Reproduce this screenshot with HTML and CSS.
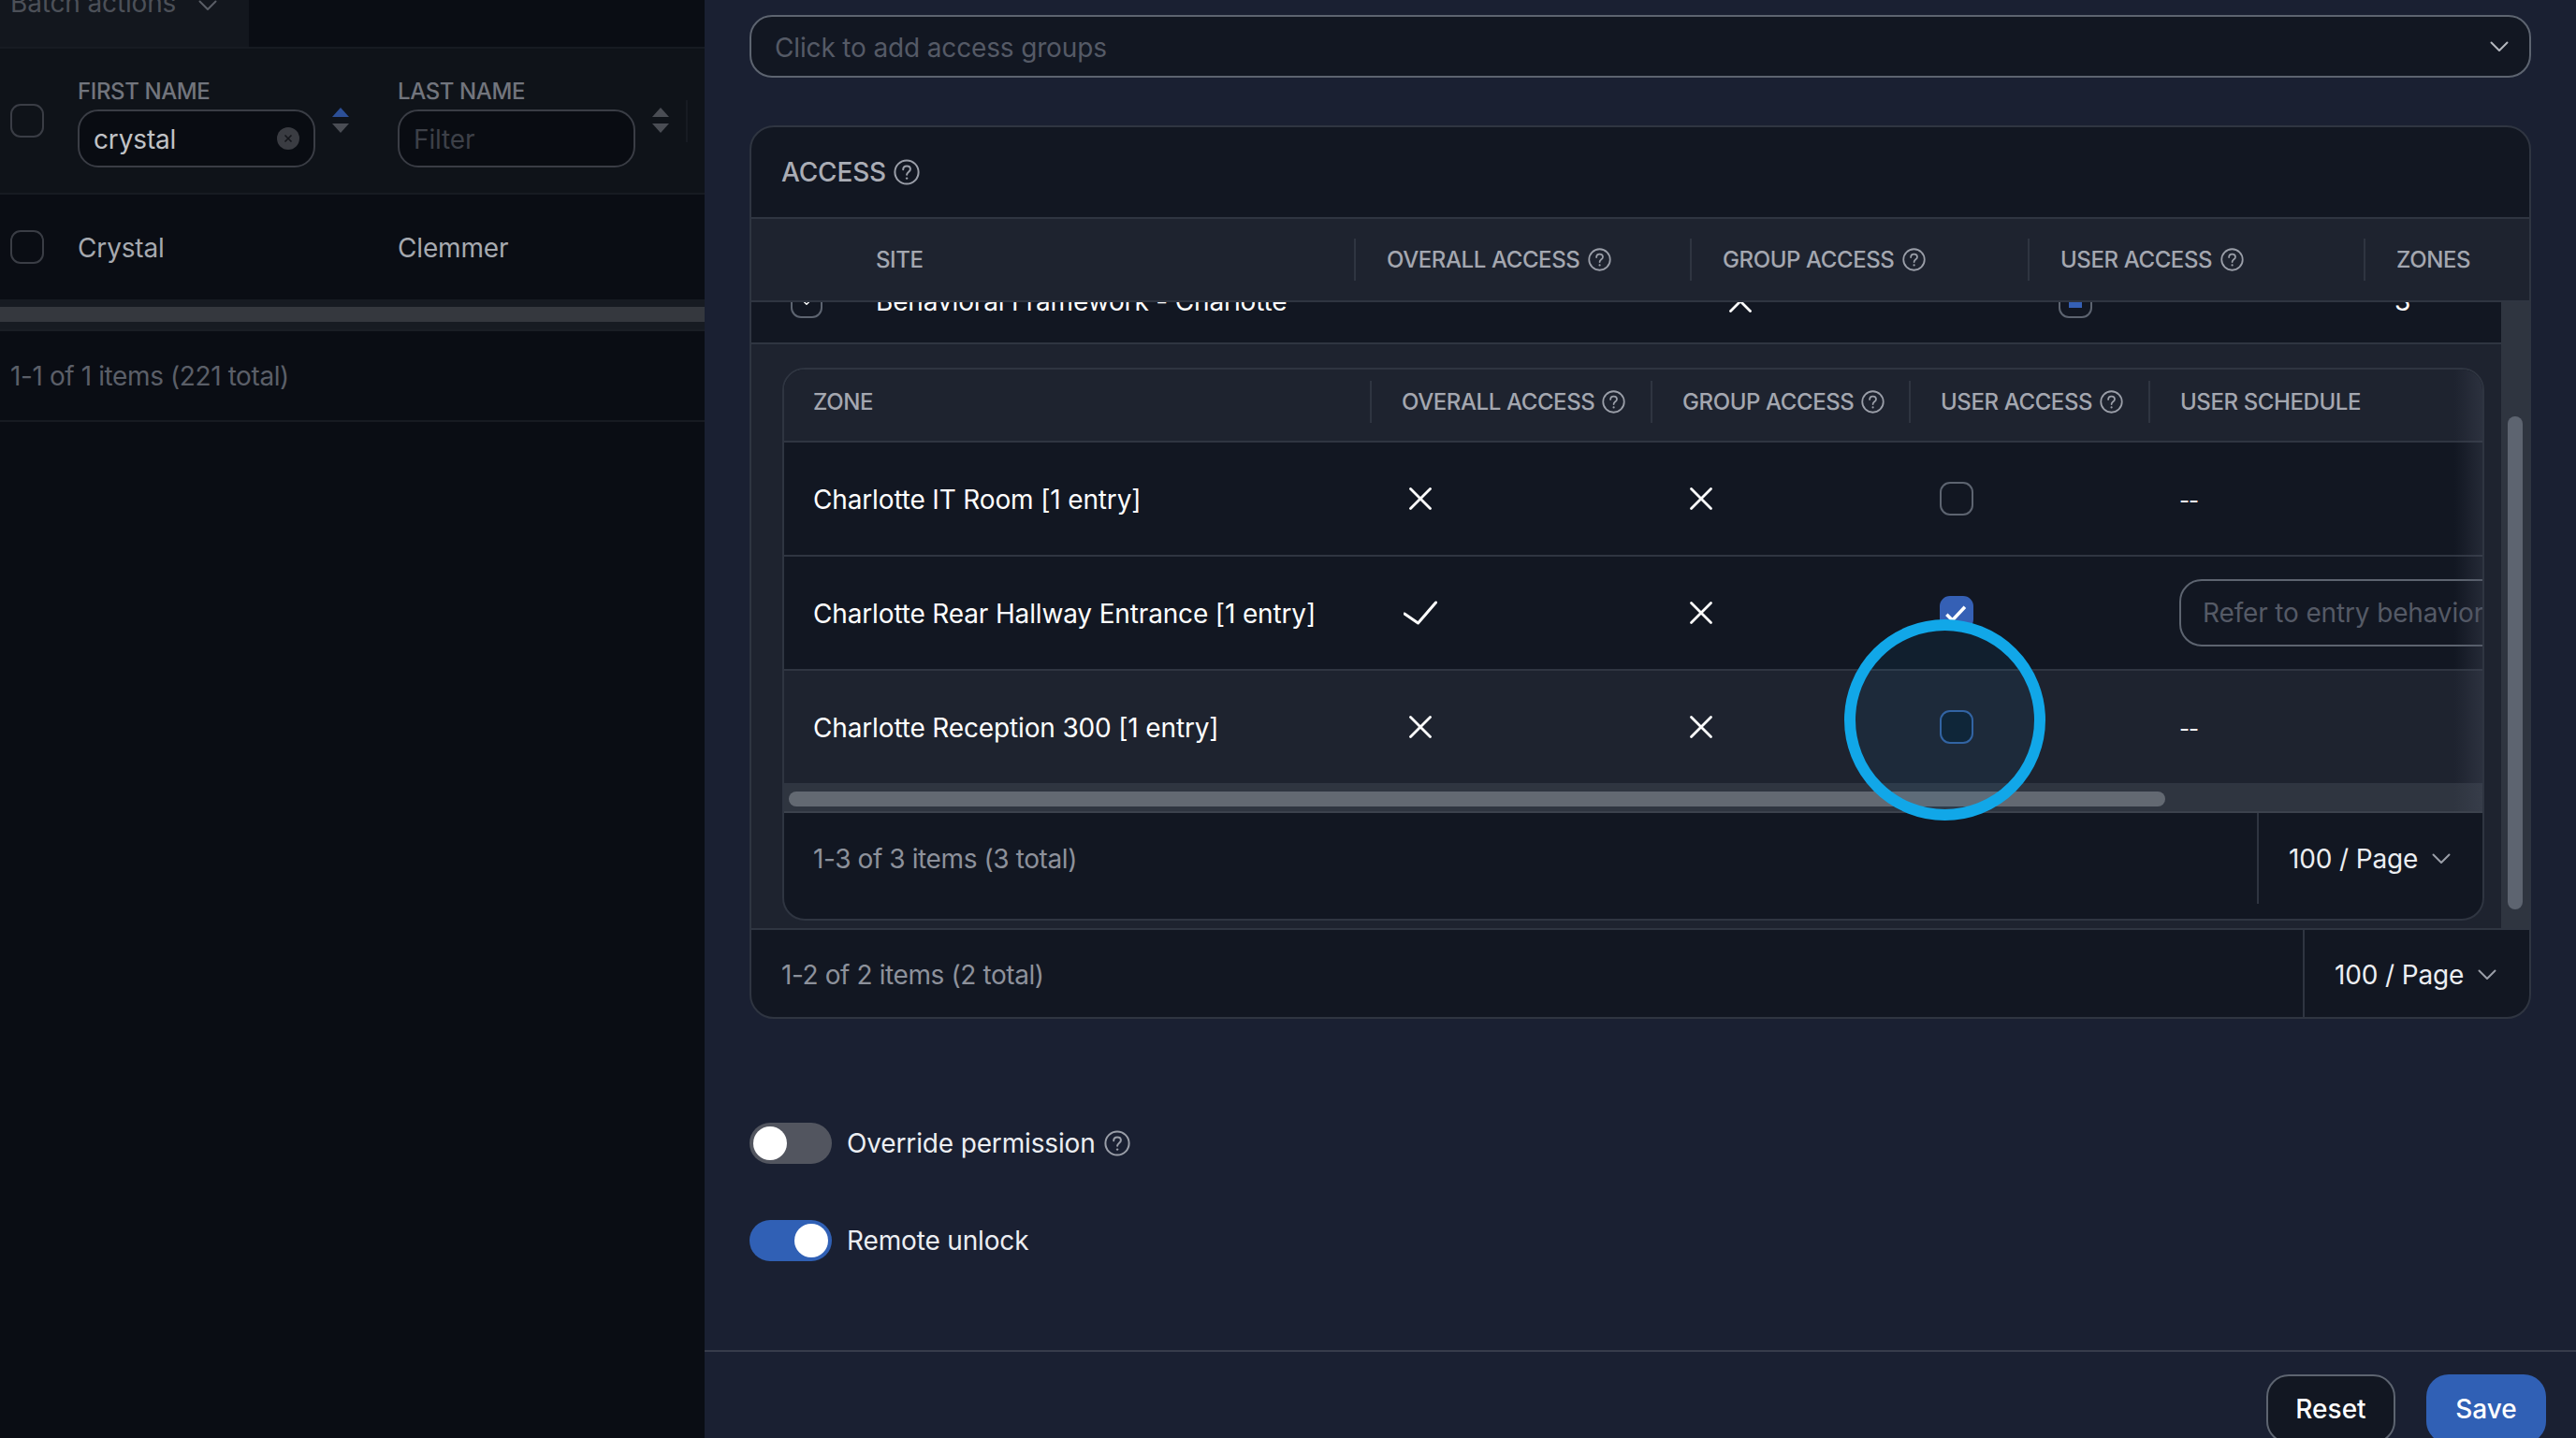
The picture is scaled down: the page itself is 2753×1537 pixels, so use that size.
FILE: index.html
```html
<!DOCTYPE html>
<html lang="en">
<head>
    <meta charset="UTF-8">
    <title>Access</title>
    <link rel="stylesheet" href="styles.css">
</head>
<body>
    <svg class="sprite" xmlns="http://www.w3.org/2000/svg">
        <symbol id="help" viewBox="0 0 28 28">
            <circle cx="14" cy="14" r="12.6" fill="none" stroke="currentColor" stroke-width="2"/>
            <path d="M10.2 11.2c0-2.3 1.7-3.8 3.9-3.8s3.8 1.4 3.8 3.4c0 2.9-3.8 3-3.8 6" fill="none" stroke="currentColor" stroke-width="2" stroke-linecap="round"/>
            <circle cx="14.1" cy="20.6" r="1.2" fill="currentColor"/>
        </symbol>
        <symbol id="cross" viewBox="0 0 36 36">
            <path d="M7.5 7.5l21 21M28.5 7.5l-21 21" fill="none" stroke="currentColor" stroke-width="2.8" stroke-linecap="round"/>
        </symbol>
        <symbol id="tick" viewBox="0 0 36 36">
            <path d="M1 19l14.5 10L34.5 7" fill="none" stroke="currentColor" stroke-width="3" stroke-linecap="round" stroke-linejoin="round"/>
        </symbol>
        <symbol id="chevron" viewBox="0 0 20 12">
            <path d="M1.5 1.5L10 10l8.500-8.500" fill="none" stroke="currentColor" stroke-width="2" stroke-linecap="round" stroke-linejoin="round"/>
        </symbol>
        <symbol id="sort" viewBox="0 0 18 27">
            <path class="sort-up" d="M9 0l9 10H0z"/>
            <path d="M0 17h18l-9 10z"/>
        </symbol>
    </svg>

    <aside class="list-panel">
        <div class="batch-row">
            <div class="batch-cell">
                <span>Batch actions</span>
                <svg class="batch-chevron"><use href="#chevron"/></svg>
            </div>
        </div>
        <div class="list-grid list-head">
            <div class="list-check"><span class="checkbox dim"></span></div>
            <div class="filter-col">
                <div class="filter">
                    <label>FIRST NAME</label>
                    <div class="filter-input">
                        <span class="filter-value">crystal</span>
                        <svg class="filter-clear" viewBox="0 0 24 24"><circle cx="12" cy="12" r="12" fill="#3a3c42"/><path d="M8.500 8.500l7 7M15.500 8.500l-7 7" stroke="#14161b" stroke-width="1.600"/></svg>
                    </div>
                </div>
                <svg class="sort sort-active"><use href="#sort"/></svg>
            </div>
            <div class="filter-col">
                <div class="filter">
                    <label>LAST NAME</label>
                    <div class="filter-input"><span class="filter-empty">Filter</span></div>
                </div>
                <svg class="sort"><use href="#sort"/></svg>
                <i class="list-sep"></i>
            </div>
        </div>
        <div class="list-grid list-row">
            <div class="list-check"><span class="checkbox dim"></span></div>
            <div class="list-text">Crystal</div>
            <div class="list-text">Clemmer</div>
        </div>
        <div class="list-scroll"><div class="list-thumb"></div></div>
        <div class="list-foot">1-1 of 1 items (221 total)</div>
    </aside>

    <main class="detail">
        <div class="detail-body">
            <div class="select">
                <span class="select-text">Click to add access groups</span>
                <svg class="select-chevron"><use href="#chevron"/></svg>
            </div>

            <section class="card">
                <h2 class="card-title">ACCESS <svg class="help big"><use href="#help"/></svg></h2>

                <div class="site-grid site-head">
                    <div class="th first"><span>SITE</span></div>
                    <div class="th"><i class="sep"></i><span>OVERALL ACCESS</span><svg class="help"><use href="#help"/></svg></div>
                    <div class="th"><i class="sep"></i><span>GROUP ACCESS</span><svg class="help"><use href="#help"/></svg></div>
                    <div class="th"><i class="sep"></i><span>USER ACCESS</span><svg class="help"><use href="#help"/></svg></div>
                    <div class="th"><i class="sep"></i><span>ZONES</span></div>
                </div>

                <div class="site-body">
                    <div class="site-scroll">
                        <div class="site-grid site-row">
                            <div class="site-name">
                                <span class="checkbox expander"><svg><use href="#chevron"/></svg></span>
                                <span>Behavioral Framework - Charlotte</span>
                            </div>
                            <div></div>
                            <div class="td-icon"><svg class="mark"><use href="#cross"/></svg></div>
                            <div class="td-check"><span class="checkbox partial"><i></i></span></div>
                            <div class="td-count">3</div>
                        </div>

                        <div class="expanded">
                            <div class="zones">
                                <div class="zone-grid zone-head">
                                    <div class="th first"><span>ZONE</span></div>
                                    <div class="th"><i class="sep"></i><span>OVERALL ACCESS</span><svg class="help"><use href="#help"/></svg></div>
                                    <div class="th"><i class="sep"></i><span>GROUP ACCESS</span><svg class="help"><use href="#help"/></svg></div>
                                    <div class="th"><i class="sep"></i><span>USER ACCESS</span><svg class="help"><use href="#help"/></svg></div>
                                    <div class="th"><i class="sep"></i><span>USER SCHEDULE</span></div>
                                </div>

                                <div class="zone-grid zone-row">
                                    <div class="zone-name">Charlotte IT Room [1 entry]</div>
                                    <div class="td-icon"><svg class="mark"><use href="#cross"/></svg></div>
                                    <div class="td-icon"><svg class="mark"><use href="#cross"/></svg></div>
                                    <div class="td-check"><span class="checkbox"></span></div>
                                    <div class="td-sched"><span class="dashes">--</span></div>
                                </div>
                                <div class="zone-grid zone-row">
                                    <div class="zone-name">Charlotte Rear Hallway Entrance [1 entry]</div>
                                    <div class="td-icon"><svg class="mark"><use href="#tick"/></svg></div>
                                    <div class="td-icon"><svg class="mark"><use href="#cross"/></svg></div>
                                    <div class="td-check"><span class="checkbox checked"><svg viewBox="0 0 36 36"><path d="M6 20l7 7 15-16" fill="none" stroke="#fff" stroke-width="4"/></svg></span></div>
                                    <div class="td-sched"><div class="sched-input">Refer to entry behavior</div></div>
                                </div>
                                <div class="zone-grid zone-row hover">
                                    <div class="zone-name">Charlotte Reception 300 [1 entry]</div>
                                    <div class="td-icon"><svg class="mark"><use href="#cross"/></svg></div>
                                    <div class="td-icon"><svg class="mark"><use href="#cross"/></svg></div>
                                    <div class="td-check"><span class="checkbox focus"></span></div>
                                    <div class="td-sched"><span class="dashes">--</span></div>
                                </div>

                                <div class="zone-scroll"><div class="zone-thumb"></div></div>
                                <div class="table-foot inner">
                                    <span class="count">1-3 of 3 items (3 total)</span>
                                    <div class="pager inner-pager">100 / Page <svg><use href="#chevron"/></svg></div>
                                </div>
                                <div class="edge-fade"></div>
                            </div>
                        </div>
                    </div>
                    <div class="vbar"><div class="vthumb"></div></div>
                </div>

                <div class="table-foot outer">
                    <span class="count">1-2 of 2 items (2 total)</span>
                    <div class="pager outer-pager">100 / Page <svg><use href="#chevron"/></svg></div>
                </div>
            </section>

            <div class="toggles">
                <div class="toggle-row">
                    <span class="toggle"><i></i></span>
                    <span>Override permission</span>
                    <svg class="help big"><use href="#help"/></svg>
                </div>
                <div class="toggle-row">
                    <span class="toggle on"><i></i></span>
                    <span>Remote unlock</span>
                </div>
            </div>
        </div>

        <footer class="actions">
            <button class="btn reset">Reset</button>
            <button class="btn save">Save</button>
        </footer>
    </main>

    <div class="ring"></div>
</body>
</html>
```

FILE: styles.css
```css
* {
    box-sizing: border-box;
}
html, body {
    margin: 0;
    height: 1537px;
    overflow: hidden;
}
body {
    position: relative;
    display: flex;
    font-family: 'Inter', 'Liberation Sans', sans-serif;
    font-size: 28px;
    letter-spacing: -0.15px;
    font-variant-ligatures: none;
    color: #eceef2;
    background: #1a2032;
}
.sprite {
    display: none;
}
svg {
    display: block;
    flex: none;
}

/* dimmed list on the left */
.list-panel {
    width: 753px;
    flex: none;
    background: #0a0d14;
    color: #a6a9af;
}
.batch-row {
    height: 52px;
    border-bottom: 2px solid #171b22;
}
.batch-cell {
    width: 266px;
    height: 50px;
    padding-left: 11px;
    display: flex;
    align-items: flex-start;
    gap: 24px;
    background: #13171e;
    color: #4c5058;
    line-height: 28px;
}
.batch-cell span {
    margin-top: -11px;
}
.batch-chevron {
    width: 20px;
    height: 12px;
    color: #5a5e66;
}
.list-grid {
    display: grid;
    grid-template-columns: 83px 342px minmax(0, 1fr);
}
.list-head {
    height: 156px;
    padding-top: 32px;
    background: #0f1319;
    border-bottom: 2px solid #171b22;
}
.list-check {
    padding-left: 11px;
    display: flex;
    align-items: center;
}
.list-head .list-check {
    margin-top: -32px;
}
.filter-col {
    display: flex;
    align-items: flex-start;
}
.filter {
    width: 254px;
}
.filter label {
    display: block;
    height: 28px;
    margin-bottom: 5px;
    font-size: 24px;
    line-height: 28px;
    font-weight: 500;
    letter-spacing: -0.4px;
    color: #72757d;
}
.filter-input {
    height: 62px;
    padding: 0 15px;
    display: flex;
    align-items: center;
    justify-content: space-between;
    border: 2px solid #3a3d45;
    border-radius: 22px;
    background: #090c12;
}
.filter-value {
    padding-top: 2px;
    color: #c0c2c6;
}
.filter-empty {
    padding-top: 2px;
    color: #3d4048;
}
.filter-clear {
    width: 24px;
    height: 24px;
}
.sort {
    width: 18px;
    height: 27px;
    margin: 31px 0 0 18px;
    fill: #4a4d54;
}
.sort-up {
    fill: var(--sort-up, #4a4d54);
}
.sort-active {
    --sort-up: #2c4f96;
}
.list-sep {
    width: 2px;
    height: 45px;
    margin: 23px 0 0 18px;
    background: #171b22;
}
.list-row {
    height: 112px;
    align-items: center;
}
.list-text {
    padding-top: 2px;
}
.list-scroll {
    height: 32px;
    padding-top: 8px;
    background: #171b22;
}
.list-thumb {
    height: 16px;
    background: #35383e;
}
.list-foot {
    height: 99px;
    padding-left: 11px;
    display: flex;
    align-items: center;
    letter-spacing: -0.4px;
    color: #5b5f68;
    border-top: 2px solid #1a1e25;
    border-bottom: 2px solid #171b22;
}

/* checkboxes */
.checkbox {
    display: block;
    width: 36px;
    height: 36px;
    flex: none;
    border: 2px solid #5d6470;
    border-radius: 11px;
    background: #121722;
}
.checkbox.dim {
    border-color: #3a3d45;
    background: transparent;
}
.checkbox.checked {
    border-color: #3560b5;
    background: #3560b5;
}
.checkbox.checked svg {
    width: 32px;
    height: 32px;
}
.checkbox.focus {
    border-color: #35609f;
    background: #0f1e2e;
}
.checkbox.partial {
    display: flex;
    align-items: center;
    justify-content: center;
}
.checkbox.partial i {
    width: 14px;
    height: 14px;
    background: #3560b5;
}
.checkbox.expander {
    width: 34px;
    display: flex;
    align-items: center;
    justify-content: center;
    color: #fff;
}
.expander svg {
    width: 14px;
    height: 9px;
}

/* right hand form */
.detail {
    flex: 1;
    min-width: 0;
    display: flex;
    flex-direction: column;
}
.detail-body {
    height: 1443px;
    flex: none;
    padding: 16px 48px 0;
}
.select {
    height: 67px;
    padding: 0 22px 0 25px;
    display: flex;
    align-items: center;
    justify-content: space-between;
    background: #121722;
    border: 2px solid #5d6470;
    border-radius: 24px;
    color: #555a66;
}
.select-text {
    padding-top: 2px;
}
.select-chevron {
    width: 20px;
    height: 12px;
    color: #b4b7be;
}
.card {
    height: 955px;
    margin-top: 51px;
    background: #121722;
    border: 2px solid #2f3541;
    border-radius: 26px;
    overflow: hidden;
}
.card-title {
    height: 96px;
    margin: 0;
    padding-left: 32px;
    display: flex;
    align-items: center;
    gap: 8px;
    font-size: 28px;
    font-weight: 500;
    color: #aaadb5;
}
.help {
    width: 25px;
    height: 25px;
    color: #9a9ea8;
}
.help.big {
    width: 28px;
    height: 28px;
}
.th {
    display: flex;
    align-items: center;
    gap: 33px;
    font-size: 24px;
    font-weight: 500;
    letter-spacing: -0.4px;
    color: #a4a7b0;
    white-space: nowrap;
}
.th .help {
    margin-left: -24px;
}
.sep {
    width: 2px;
    height: 45px;
    background: #2f3541;
}
.site-grid {
    display: grid;
    grid-template-columns: 644px 359px 361px 359px minmax(0, 1fr);
}
.site-head {
    height: 91px;
    background: #1e232f;
    border-top: 2px solid #2f3541;
    border-bottom: 2px solid #2f3541;
}
.site-head .first {
    padding-left: 133px;
}
.site-body {
    height: 669px;
    display: flex;
}
.site-scroll {
    flex: 1;
    min-width: 0;
    overflow: hidden;
}
.site-row {
    height: 90px;
    margin-top: -45px;
    align-items: center;
    border-bottom: 2px solid #2f3541;
    color: #fff;
}
.site-name {
    padding-left: 42px;
    display: flex;
    align-items: center;
    gap: 57px;
    white-space: nowrap;
}
.td-icon {
    padding-left: 36px;
    display: flex;
    align-items: center;
}
.mark {
    width: 36px;
    height: 36px;
    color: #fff;
}
.td-check {
    padding-left: 33px;
}
.td-count {
    padding-left: 33px;
}
.expanded {
    height: 624px;
    padding: 25px 18px 8px 33px;
    background: #1e232f;
}
.zones {
    position: relative;
    height: 591px;
    background: #121722;
    border: 2px solid #2f3541;
    border-radius: 24px;
    overflow: hidden;
}
.zone-grid {
    display: grid;
    grid-template-columns: 626px 300px 276px 256px minmax(0, 1fr);
}
.zone-head {
    height: 78px;
    padding-bottom: 7px;
    background: #1e232f;
    border-bottom: 2px solid #2f3541;
}
.zone-head .th {
    gap: 32px;
}
.zone-head .first {
    padding-left: 31px;
}
.zone-row {
    height: 122px;
    align-items: center;
    border-bottom: 2px solid #2f3541;
    color: #fff;
}
.zone-row.hover {
    background: #1e232f;
}
.zone-name {
    padding: 1px 0 0 31px;
    white-space: nowrap;
}
.td-sched {
    padding-left: 33px;
}
.dashes {
    display: block;
    padding-top: 3px;
    font-size: 24px;
    letter-spacing: -1px;
}
.sched-input {
    width: 420px;
    height: 72px;
    padding-left: 23px;
    display: flex;
    align-items: center;
    white-space: nowrap;
    border: 2px solid #5d6470;
    border-radius: 24px;
    color: #555a66;
}
.zone-scroll {
    height: 30px;
    padding: 7px 0 0 5px;
    background: #2f3540;
    border-bottom: 2px solid #3c424d;
}
.zone-thumb {
    width: 1471px;
    height: 16px;
    background: #636972;
    border-radius: 8px;
}
.edge-fade {
    position: absolute;
    top: 0;
    right: 0;
    width: 30px;
    height: 472px;
    background: linear-gradient(to right, rgba(70, 76, 92, 0), rgba(70, 76, 92, 0.35));
}
.vbar {
    width: 30px;
    flex: none;
    padding: 122px 7px 0 7px;
    background: #2f3540;
}
.vthumb {
    height: 527px;
    background: #5d6470;
    border-radius: 8px;
}
.table-foot {
    display: flex;
    align-items: stretch;
    justify-content: space-between;
    color: #8d919b;
}
.table-foot.inner {
    height: 113px;
    padding-left: 31px;
}
.table-foot.inner .count {
    margin-bottom: 15px;
}
.table-foot.outer {
    height: 98px;
    padding-left: 32px;
    border-top: 2px solid #2f3541;
}
.count {
    align-self: center;
    letter-spacing: -0.4px;
}
.pager {
    display: flex;
    align-items: center;
    gap: 15px;
    padding-left: 32px;
    color: #eceef2;
    border-left: 2px solid #2f3541;
}
.inner-pager {
    width: 241px;
    height: 97px;
}
.outer-pager {
    width: 242px;
}
.pager svg {
    width: 20px;
    height: 12px;
    color: #9a9ea8;
}
.toggles {
    margin-top: 111px;
    display: flex;
    flex-direction: column;
    gap: 60px;
}
.toggle-row {
    display: flex;
    align-items: center;
    gap: 16px;
    height: 44px;
}
.toggle-row .help {
    margin-left: -7px;
}
.toggle {
    width: 88px;
    height: 44px;
    padding: 4px;
    display: flex;
    border-radius: 22px;
    background: #52555f;
}
.toggle i {
    width: 36px;
    height: 36px;
    border-radius: 50%;
    background: #fff;
}
.toggle.on {
    justify-content: flex-end;
    background: #3060b5;
}
.actions {
    flex: 1;
    padding: 24px 32px 0 0;
    display: flex;
    justify-content: flex-end;
    align-items: flex-start;
    gap: 33px;
    border-top: 2px solid #373c4b;
}
.btn {
    height: 74px;
    font-family: inherit;
    font-size: 28px;
    font-weight: 500;
    color: #fff;
    border-radius: 24px;
}
.reset {
    width: 138px;
    background: #121722;
    border: 2px solid #5d6470;
}
.save {
    width: 128px;
    background: #3060b5;
    border: 0;
}

/* annotation over the screenshot */
.ring {
    position: absolute;
    left: 1971px;
    top: 662px;
    width: 215px;
    height: 215px;
    border: 12px solid #11a7e8;
    border-radius: 50%;
    background: rgba(17, 167, 232, 0.06);
}
```
